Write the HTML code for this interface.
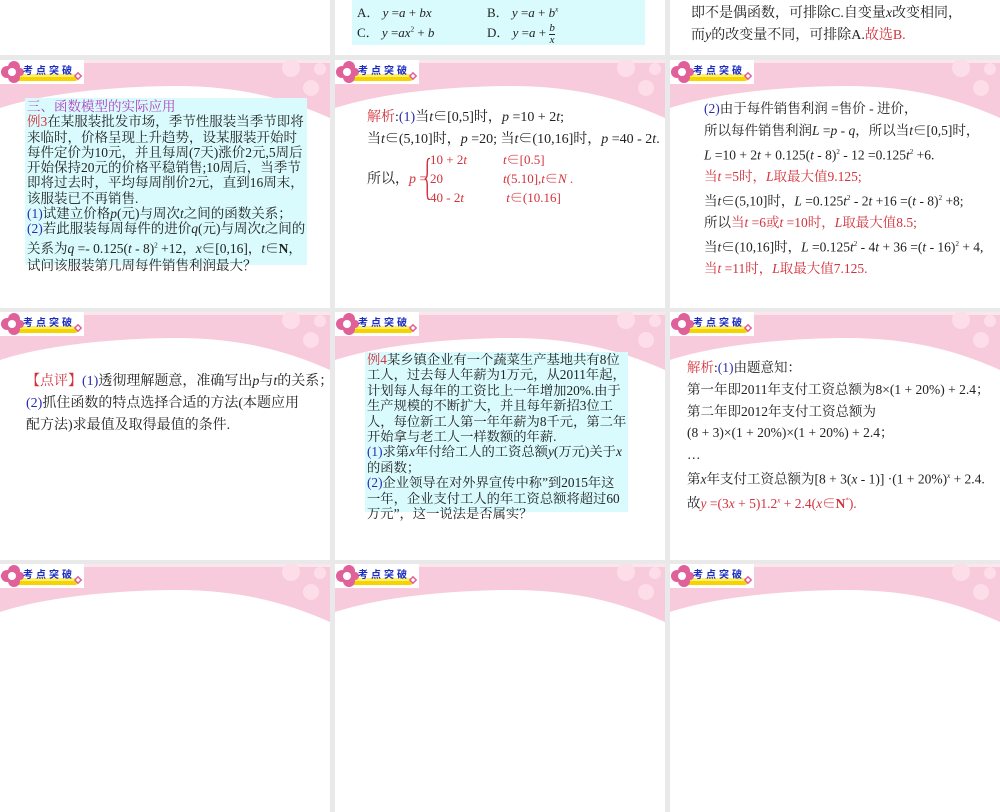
<!DOCTYPE html>
<html><head><meta charset="utf-8">
<style>
*{margin:0;padding:0;box-sizing:border-box}
body{width:1000px;height:600px;background:#e9e9e9;position:relative;overflow:hidden;font-family:"Liberation Serif","Noto Serif CJK SC","Noto Sans CJK SC",serif;color:#222}
.s{position:absolute;width:330px;height:248px;background:#fff;overflow:hidden}
.bg{position:absolute;left:0;top:0}
.t{position:absolute;white-space:nowrap}
.cy{position:absolute;background:#d9fbfd}
.r{color:#d2323c}.b{color:#2a2ab0}.m{color:#b040c0}
i{font-style:italic}
</style></head><body>

<svg width="0" height="0" style="position:absolute">
<defs>
<g id="hd">
<path d="M0,0H330V58C290,40 240,25 170,26C100,27 40,35 0,48Z" fill="#f7cbdb"/>
<rect x="0" y="0" width="330" height="3" fill="#fbe6ee"/>
<g fill="#fcdde8">
<circle cx="291" cy="8" r="9"/><circle cx="320" cy="9" r="6"/><circle cx="311" cy="28" r="8"/>
</g>
<rect x="0" y="0" width="84" height="24" fill="#fff"/>
<rect x="15" y="14" width="63" height="7" rx="3" fill="#f5d400"/>
<rect x="15" y="14" width="63" height="3" fill="#ffef70"/>
<g fill="#e0609a"><circle cx="7" cy="12" r="6"/><circle cx="14" cy="7" r="6"/><circle cx="14" cy="17" r="6"/><circle cx="20" cy="12" r="4"/></g>
<circle cx="12" cy="12" r="4" fill="#fff"/>
<rect x="75" y="13" width="6" height="6" transform="rotate(45 78 16)" fill="#e0609a"/>
<rect x="76.5" y="14.5" width="3" height="3" transform="rotate(45 78 16)" fill="#fff"/>
<text x="23" y="14" font-size="10" font-weight="bold" fill="#1a2cc0" font-family="Noto Sans CJK SC,sans-serif" letter-spacing="3">考点突破</text>
</g>
</defs></svg>

<!-- Top row -->
<div class="s" style="left:0;top:-193px"><svg class="bg" width="330" height="248"><use href="#hd"/></svg></div>
<div class="s" style="left:335px;top:-193px"><svg class="bg" width="330" height="248"><use href="#hd"/></svg>
<div class="cy" style="left:17px;top:150px;width:293px;height:88px"></div>
<div class="t" style="left:22px;top:195px;font-size:13px">A． <i>y</i> =<i>a</i> + <i>bx</i></div>
<div class="t" style="left:152px;top:195px;font-size:13px">B． <i>y</i> =<i>a</i> + <i>b</i><sup style="font-size:7px"><i>x</i></sup></div>
<div class="t" style="left:22px;top:215px;font-size:13px">C． <i>y</i> =<i>ax</i><sup style="font-size:7px">2</sup> + <i>b</i></div>
<div class="t" style="left:152px;top:215px;font-size:13px">D． <i>y</i> =<i>a</i> + <span style="display:inline-block;vertical-align:middle;text-align:center;font-size:11px;line-height:11px"><i>b</i><br><span style="border-top:1px solid #222;display:block"><i>x</i></span></span></div>
</div>
<div class="s" style="left:670px;top:-193px"><svg class="bg" width="330" height="248"><use href="#hd"/></svg>
<div class="t" style="left:21px;top:195px;font-size:14px">即不是偶函数，可排除C.自变量<i>x</i>改变相同，</div>
<div class="t" style="left:21px;top:217px;font-size:14px">而<i>y</i>的改变量不同，可排除A.<span class="r">故选B.</span></div>
</div>

<!-- Row 2 -->
<div class="s" style="left:0;top:60px"><svg class="bg" width="330" height="248"><use href="#hd"/></svg>
<div class="cy" style="left:25px;top:38px;width:282px;height:167px"></div>
<div class="t" style="left:27px;top:39px;font-size:13.5px;line-height:15.3px">
<span class="m">三、函数模型的实际应用</span><br>
<span class="r">例3</span>在某服装批发市场，季节性服装当季节即将<br>来临时，价格呈现上升趋势，设某服装开始时<br>每件定价为10元，并且每周(7天)涨价2元,5周后<br>开始保持20元的价格平稳销售;10周后，当季节<br>即将过去时，平均每周削价2元，直到16周末，<br>该服装已不再销售.<br>
<span class="b">(1)</span>试建立价格<i>p</i>(元)与周次<i>t</i>之间的函数关系；<br>
<span class="b">(2)</span>若此服装每周每件的进价<i>q</i>(元)与周次<i>t</i>之间的<br>
<span style="line-height:19px">关系为<i>q</i> =- 0.125(<i>t</i> - 8)<sup style="font-size:7px">2</sup> +12，<i>x</i>∈[0,16]，<i>t</i>∈<b>N</b>，</span><br>试问该服装第几周每件销售利润最大？</div>
</div>
<div class="s" style="left:335px;top:60px"><svg class="bg" width="330" height="248"><use href="#hd"/></svg>
<div class="t" style="left:32px;top:46px;font-size:14px"><span class="r">解析</span>:<span class="b">(1)</span>当<i>t</i>∈[0,5]时，<i>p</i> =10 + 2<i>t</i>;</div>
<div class="t" style="left:32px;top:68px;font-size:14px">当<i>t</i>∈(5,10]时，<i>p</i> =20;  当<i>t</i>∈(10,16]时，<i>p</i> =40 - 2<i>t</i>.</div>
<div class="t" style="left:32px;top:108px;font-size:14px">所以，<span class="r"><i>p</i> =</span></div>
<div class="t r" style="left:88px;top:88px;font-size:18px;transform:scaleY(2.8);transform-origin:top">{</div>
<div class="t r" style="left:95px;top:90px;font-size:13px;line-height:19px">10 + 2<i>t</i><br>20<br>40 - 2<i>t</i></div>
<div class="t r" style="left:168px;top:90px;font-size:13px;line-height:19px"><i>t</i>∈[0.5]<br><i>t</i>(5.10],<i>t</i>∈<i>N</i> .<br>&nbsp;<i>t</i>∈(10.16]</div>
</div>
<div class="s" style="left:670px;top:60px"><svg class="bg" width="330" height="248"><use href="#hd"/></svg>
<div class="t" style="left:34px;top:38px;font-size:13.5px;line-height:21.8px">
<span class="b">(2)</span>由于每件销售利润 =售价 - 进价，<br>
所以每件销售利润<i>L</i> =<i>p</i> - <i>q</i>，所以当<i>t</i>∈[0,5]时，<br>
<i>L</i> =10 + 2<i>t</i> + 0.125(<i>t</i> - 8)<sup style="font-size:7px">2</sup> - 12 =0.125<i>t</i><sup style="font-size:7px">2</sup> +6.<br>
<span class="r">当<i>t</i> =5时，<i>L</i>取最大值9.125;</span><br>
当<i>t</i>∈(5,10]时，<i>L</i> =0.125<i>t</i><sup style="font-size:7px">2</sup> - 2<i>t</i> +16 =(<i>t</i> - 8)<sup style="font-size:7px">2</sup> +8;<br>
所以<span class="r">当<i>t</i> =6或<i>t</i> =10时，<i>L</i>取最大值8.5;</span><br>
当<i>t</i>∈(10,16]时，<i>L</i> =0.125<i>t</i><sup style="font-size:7px">2</sup> - 4<i>t</i> + 36 =(<i>t</i> - 16)<sup style="font-size:7px">2</sup> + 4,<br>
<span class="r">当<i>t</i> =11时，<i>L</i>取最大值7.125.</span></div>
</div>

<!-- Row 3 -->
<div class="s" style="left:0;top:312px"><svg class="bg" width="330" height="248"><use href="#hd"/></svg>
<div class="t" style="left:26px;top:59px;font-size:14px;line-height:22px">
<span class="r">【点评】</span><span class="b">(1)</span>透彻理解题意，准确写出<i>p</i>与<i>t</i>的关系；<br>
<span class="b">(2)</span>抓住函数的特点选择合适的方法(本题应用<br>配方法)求最值及取得最值的条件.</div>
</div>
<div class="s" style="left:335px;top:312px"><svg class="bg" width="330" height="248"><use href="#hd"/></svg>
<div class="cy" style="left:30px;top:40px;width:263px;height:160px"></div>
<div class="t" style="left:32px;top:40px;font-size:13.3px;line-height:15.4px">
<span class="r">例4</span>某乡镇企业有一个蔬菜生产基地共有8位<br>工人，过去每人年薪为1万元，从2011年起，<br>计划每人每年的工资比上一年增加20%.由于<br>生产规模的不断扩大，并且每年新招3位工<br>人，每位新工人第一年年薪为8千元，第二年<br>开始拿与老工人一样数额的年薪.<br>
<span class="b">(1)</span>求第<i>x</i>年付给工人的工资总额<i>y</i>(万元)关于<i>x</i><br>的函数；<br>
<span class="b">(2)</span>企业领导在对外界宣传中称”到2015年这<br>一年，企业支付工人的年工资总额将超过60<br>万元”，这一说法是否属实？</div>
</div>
<div class="s" style="left:670px;top:312px"><svg class="bg" width="330" height="248"><use href="#hd"/></svg>
<div class="t" style="left:17px;top:45px;font-size:13.5px;line-height:21.8px">
<span class="r">解析</span>:<span class="b">(1)</span>由题意知：<br>
第一年即2011年支付工资总额为8×(1 + 20%) + 2.4；<br>
第二年即2012年支付工资总额为<br>
(8 + 3)×(1 + 20%)×(1 + 20%) + 2.4；<br>
<span style="line-height:18px">…</span><br>
第<i>x</i>年支付工资总额为[8 + 3(<i>x</i> - 1)] ·(1 + 20%)<sup style="font-size:7px"><i>x</i></sup> + 2.4.<br>
故<span class="r"><i>y</i> =(3<i>x</i> + 5)1.2<sup style="font-size:7px"><i>x</i></sup> + 2.4(<i>x</i>∈<b>N</b><sup style="font-size:7px">*</sup>).</span></div>
</div>

<!-- Row 4 -->
<div class="s" style="left:0;top:564px"><svg class="bg" width="330" height="248"><use href="#hd"/></svg></div>
<div class="s" style="left:335px;top:564px"><svg class="bg" width="330" height="248"><use href="#hd"/></svg></div>
<div class="s" style="left:670px;top:564px"><svg class="bg" width="330" height="248"><use href="#hd"/></svg></div>
</body></html>
